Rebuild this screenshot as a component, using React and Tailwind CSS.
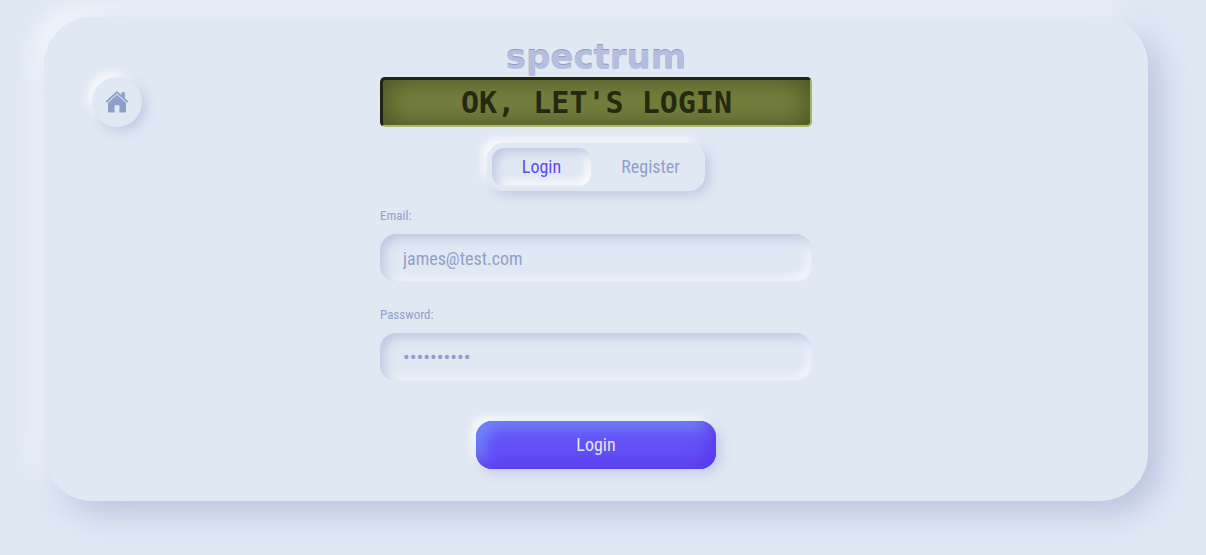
import { useState } from "react";

function HomeIcon() {
  return (
    <svg viewBox="0 0 24 24" className="size-6" fill="currentColor" aria-hidden="true">
      <path d="M16.5 2.2h3.4v7l-3.4-3.1z" />
      <path d="M12 1 23.4 11.3 22.2 12.7 12 3.5 1.8 12.7.6 11.3z" />
      <path d="M12 4.7 21 12.8V21.3a1.2 1.2 0 0 1-1.2 1.2H14.4V15.2H9.6v7.3H4.2A1.2 1.2 0 0 1 3 21.3V12.8z" />
    </svg>
  );
}

function Tab({ active, children, onClick }) {
  return (
    <button
      type="button"
      aria-pressed={active}
      onClick={onClick}
      className={
        "h-[38px] flex-1 rounded-xl text-lg " +
        (active
          ? "text-[#6048f0] shadow-[inset_4px_4px_10px_#c0c8e3,inset_-4px_-4px_8px_#ffffff]"
          : "text-[#909fca]")
      }
    >
      {children}
    </button>
  );
}

function Field({ id, label, ...props }) {
  return (
    <div className="w-full">
      <label htmlFor={id} className="block text-[13px] leading-5">
        {label}
      </label>
      <input
        id={id}
        className="mt-2 block h-12 w-full rounded-2xl bg-transparent px-[23px] text-lg text-[#909fca] shadow-[inset_4px_4px_12px_#bcc5e2,inset_-4px_-4px_8px_#fafcff] outline-none [&[type=password]]:text-xl"
        {...props}
      />
    </div>
  );
}

export default function App() {
  const [mode, setMode] = useState("Login");
  return (
    <div className="min-h-screen bg-[#e0e8f4] pt-[17px] pr-[58px] pb-[54px] pl-11 font-['Roboto_Condensed','Liberation_Sans_Narrow','Liberation_Sans',sans-serif] text-[#909fca]">
      <main className="grid grid-cols-[1fr_minmax(0,432px)_1fr] rounded-[48px] bg-[#e0e8f4] px-12 pt-6 pb-8 shadow-[12px_12px_32px_#b8c2df,-8px_-8px_24px_#f8fbff]">
        <div className="pt-9">
          <a
            href="#home"
            aria-label="Home"
            className="flex size-[50px] items-center justify-center rounded-full bg-[#e0e8f4] shadow-[4px_4px_12px_#c0c8e3,-4px_-4px_10px_#ffffff]"
          >
            <HomeIcon />
          </a>
        </div>

        <div className="flex flex-col items-center">
          <h1 className="h-9 font-['DejaVu_Sans',sans-serif] text-[34px] leading-8 font-bold text-[#b4bfe0] [text-shadow:0_-1px_0_#929bb5]">
            spectrum
          </h1>
          <p className="flex h-[50px] w-full items-center justify-center rounded-[5px] border-t-3 border-r-2 border-b-2 border-l-3 border-t-[#202412] border-r-[#a6b467] border-b-[#acb970] border-l-[#202412] bg-[#7b8642] font-['DejaVu_Sans_Mono',monospace] text-[30px] leading-none font-bold whitespace-pre text-[#25290f] shadow-[inset_0_0_32px_#434a1f]">
            OK, LET'S LOGIN
          </p>

          <div className="mt-4 flex h-12 w-[218px] items-center gap-2.5 rounded-2xl bg-[#e0e8f4] p-[5px] shadow-[4px_4px_12px_#c0c8e3,-4px_-4px_10px_#ffffff]">
            <Tab active={mode === "Login"} onClick={() => setMode("Login")}>
              Login
            </Tab>
            <Tab active={mode === "Register"} onClick={() => setMode("Register")}>
              Register
            </Tab>
          </div>

          <form className="flex w-full flex-col items-center pt-[15px]" onSubmit={(e) => e.preventDefault()}>
            <div className="flex w-full flex-col gap-[23px]">
              <Field id="email" label="Email:" type="email" defaultValue="james@test.com" />
              <Field id="password" label="Password:" type="password" defaultValue="password12" />
            </div>
            <button
              type="submit"
              className="mt-10 h-12 w-60 rounded-2xl bg-[#6350f8] text-lg text-[#e0e8f4] shadow-[4px_4px_12px_#c0c8e3,-4px_-4px_10px_#ffffff,inset_-6px_-6px_16px_#5a36ea,inset_6px_6px_16px_#7499fa]"
            >
              {mode}
            </button>
          </form>
        </div>
      </main>
    </div>
  );
}
